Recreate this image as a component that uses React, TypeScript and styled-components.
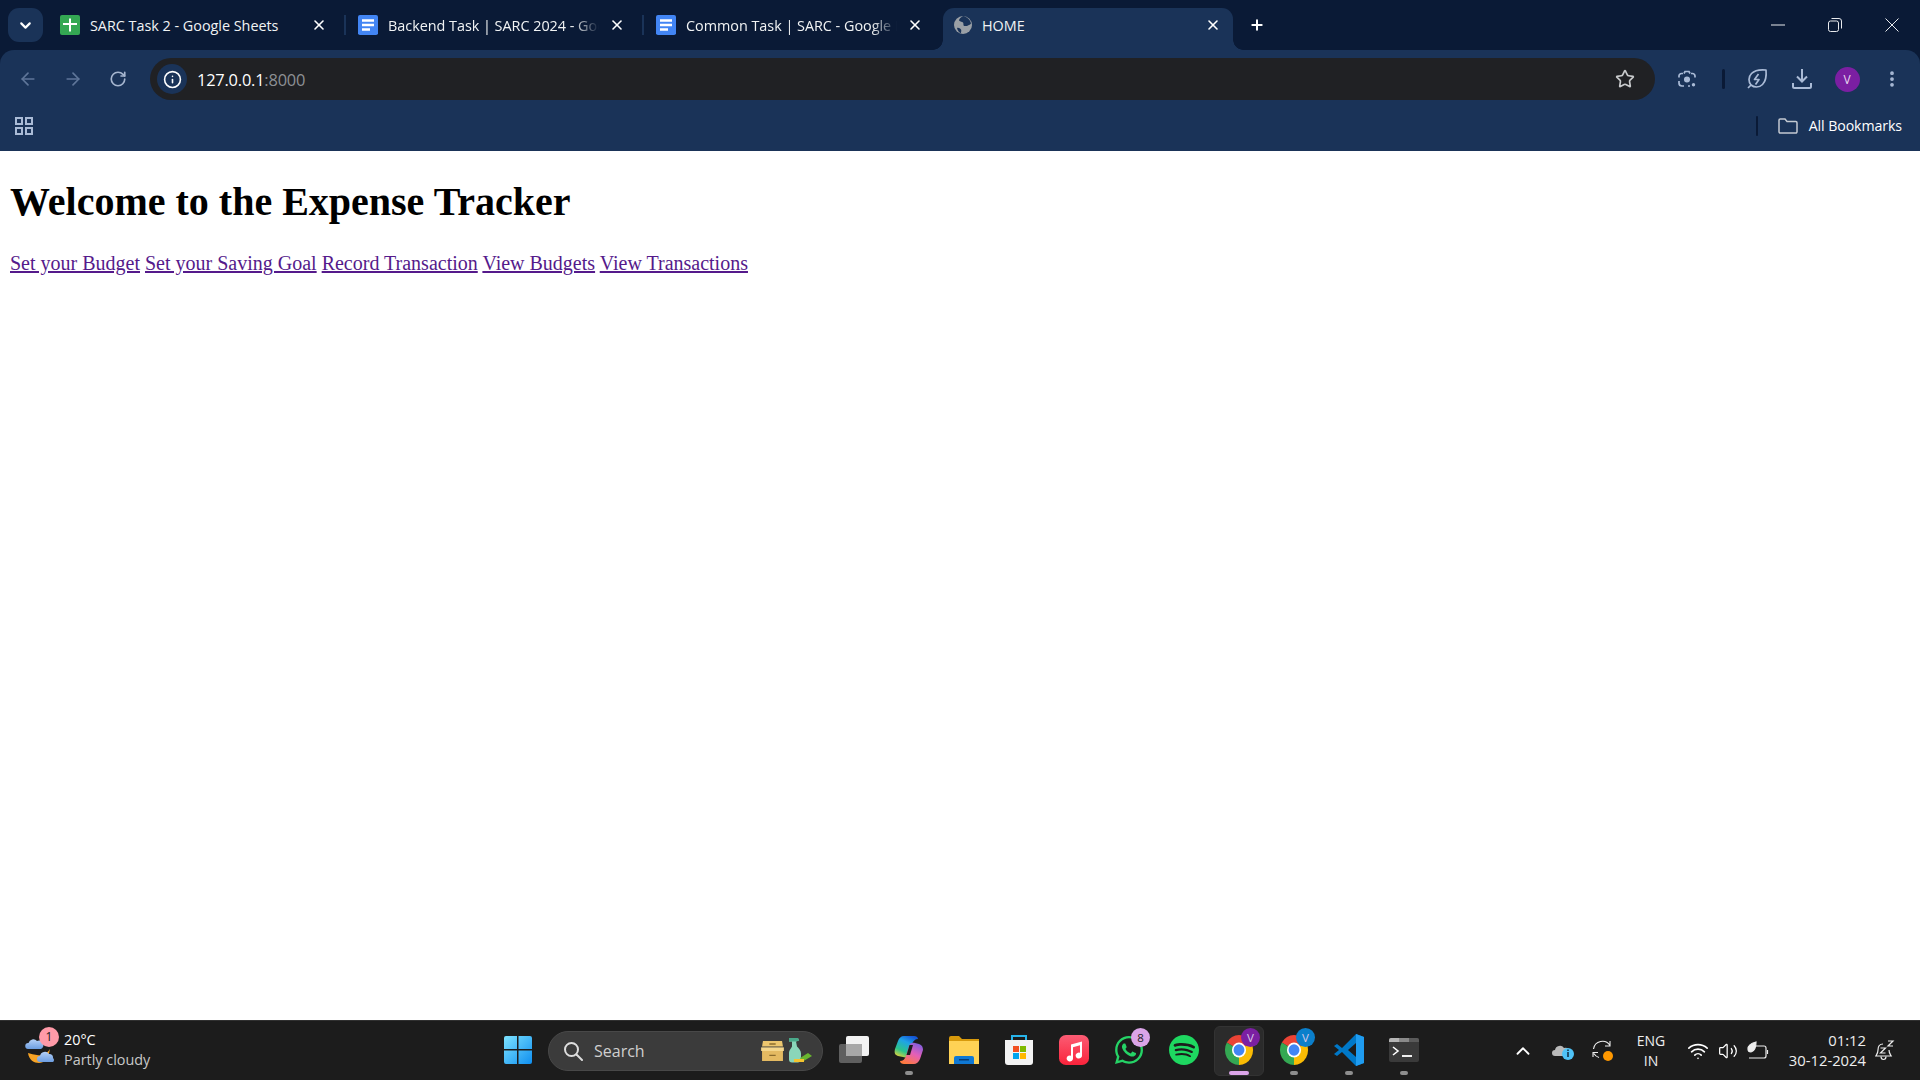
import React from "react";
import styled, { createGlobalStyle } from "styled-components";
import { ArrowLeft, ArrowRight, ChevronDown, ChevronUp, Info, MoreVertical, Plus, RotateCw, Star, Volume2, Wifi, X } from "lucide-react";
import { FaWhatsapp } from "react-icons/fa";
import { SiSpotify } from "react-icons/si";

const UI = `"Open Sans", "Noto Sans", sans-serif`;

const Global = createGlobalStyle`
  html, body { margin: 0; padding: 0; height: 100%; background: #fff; }
  #root { height: 100%; }
`;

const Screen = styled.div`display:flex;flex-direction:column;height:1080px;overflow:hidden;`;
const Strip = styled.div`display:flex;align-items:flex-end;height:50px;background:#0a1a36;padding-left:8px;`;
const TabMenu = styled.div`display:flex;align-items:center;justify-content:center;flex:none;width:35px;height:34px;margin:0 6px 8px 0;border-radius:11px;background:#1a3358;color:#fff;`;
const Tab = styled.div<{ $active?: boolean }>`
  position:relative;display:flex;align-items:center;gap:10px;flex:none;width:290px;height:42px;padding:0 12px 8px 11px;box-sizing:border-box;
  border-radius:11px 11px 0 0;background:${(p) => (p.$active ? "#1a3358" : "transparent")};
  ${(p) => p.$active ? `
    &::before,&::after{content:"";position:absolute;bottom:0;width:10px;height:10px;background:radial-gradient(circle at var(--c) 0,#0a1a36 9.5px,#1a3358 10px);}
    &::before{left:-10px;--c:0;}
    &::after{right:-10px;--c:100%;}
  ` : ""}
`;
const TabTitle = styled.div<{ $fade?: boolean }>`
  flex:1;min-width:0;white-space:nowrap;overflow:hidden;font:14.4px ${UI};color:#f1f3f4;letter-spacing:-.02px;
  ${(p) => p.$fade ? "mask-image:linear-gradient(90deg,#000 88%,transparent 100%);" : ""}
`;
const TabSep = styled.div<{ $hidden?: boolean }>`flex:none;width:2px;height:20px;margin:0 1px 15px 5px;background:${(p) => (p.$hidden ? "transparent" : "#1a3358")};`;
const NewTab = styled.div`display:flex;flex:none;color:#fff;margin:0 0 17px 16px;`;
const WindowControls = styled.div`display:flex;margin-left:auto;align-self:stretch;`;
const WindowButton = styled.div`display:flex;align-items:center;justify-content:center;width:57px;height:50px;color:#e8eaed;`;

const ToolbarBack = styled.div`background:#0a1a36;`;
const Toolbar = styled.div`display:flex;align-items:center;height:50px;background:#1a3358;border-radius:14px 14px 0 0;`;
const NavGroup = styled.div`display:flex;flex:none;padding-left:5px;width:150px;box-sizing:border-box;margin-top:8px;`;
const NavButton = styled.div<{ $dim?: boolean }>`display:flex;align-items:center;justify-content:center;flex:none;width:45px;height:30px;color:${(p) => (p.$dim ? "#5f7699" : "#a6b6cf")};`;
const Omnibox = styled.div`display:flex;align-items:center;flex:none;width:1505px;height:42px;margin-top:8px;border-radius:21px;background:#202124;box-sizing:border-box;padding:0 20px 0 7px;`;
const SiteChip = styled.div`display:flex;align-items:center;justify-content:center;flex:none;width:30px;height:30px;border-radius:50%;background:#1a3358;color:#fff;margin-right:10px;`;
const Url = styled.div`flex:1;font:16.4px ${UI};color:#fff;letter-spacing:-.2px;`;
const UrlPort = styled.span`color:#8d9094;`;
const StarSlot = styled.div`display:flex;color:#c8cacc;`;
const ToolIcons = styled.div`display:flex;align-items:center;flex:1;min-width:0;margin-top:8px;`;
const ToolIcon = styled.div<{ $w: number }>`display:flex;align-items:center;justify-content:center;flex:none;width:${(p) => p.$w}px;color:#aabbd6;`;
const ToolSep = styled.div`flex:none;width:3px;height:20px;margin-left:3px;background:#0a1a36;border-radius:2px;`;
const Avatar = styled.div`display:flex;align-items:center;justify-content:center;width:25px;height:25px;border-radius:50%;background:#7b1fa2;color:#e6d8ee;font:12px ${UI};`;

const Bookmarks = styled.div`display:flex;align-items:center;height:51px;background:#1a3358;padding:0 18px 0 15px;color:#aabbd6;`;
const BookmarkSep = styled.div`flex:none;width:2px;height:20px;margin-left:auto;background:#0a1a36;border-radius:1px;`;
const BookmarkFolder = styled.div`display:flex;margin:0 11px 0 20px;color:#c3c9d1;`;
const BookmarkLabel = styled.div`font:14.2px ${UI};color:#fff;letter-spacing:-.1px;`;

const Page = styled.main`flex:1;padding:0 10px;background:#fff;color:#000;font-family:"Liberation Serif","Times New Roman",serif;`;
const Heading = styled.h1`font-size:40px;font-weight:bold;margin:28px 0 26.8px;line-height:46px;`;
const Links = styled.p`margin:26.8px 0;font-size:20px;line-height:23px;`;
const VisitedLink = styled.a`color:#551a8b;text-decoration:underline;`;

const Taskbar = styled.footer`display:flex;align-items:center;flex:none;height:60px;box-sizing:border-box;background:#1c1c1c;border-top:1px solid #303030;`;
const Weather = styled.div`display:flex;align-items:center;flex:none;width:490px;box-sizing:border-box;padding-left:25px;gap:9px;`;
const WeatherIcon = styled.div`position:relative;width:30px;height:30px;flex:none;`;
const WeatherBadge = styled.div`position:absolute;left:14px;top:-9px;width:20px;height:20px;border-radius:50%;background:#ff9aa8;color:#1c1c1c;font:12px/20px ${UI};text-align:center;`;
const WeatherText = styled.div`display:flex;flex-direction:column;padding-bottom:1px;font:14.4px/20px ${UI};color:#fff;`;
const WeatherSub = styled.span`color:#c8c8c8;`;
const Slot = styled.div<{ $w?: number; $active?: boolean; $dot?: boolean }>`
  position:relative;display:flex;align-items:center;justify-content:center;flex:none;width:${(p) => p.$w ?? 55}px;height:50px;box-sizing:border-box;padding-bottom:2px;
  ${(p) => p.$active ? `&::before{content:"";position:absolute;left:3px;right:2px;top:0;bottom:0;background:#2b2b2b;border:1px solid #333;border-radius:6px;box-sizing:border-box;}` : ""}
  ${(p) => p.$dot ? `&::after{content:"";position:absolute;bottom:1px;left:50%;width:${p.$active ? 20 : 8}px;height:4px;margin-left:${p.$active ? -10 : -4}px;border-radius:2px;background:${p.$active ? "#dba4e8" : "#8e8e8e"};}` : ""}
  & > svg{position:relative;}
`;
const SearchPill = styled.div`display:flex;align-items:center;gap:4px;flex:none;width:275px;height:40px;margin:0 3px;box-sizing:border-box;padding:0 10px 0 14px;border-radius:20px;background:#3b3b3b;border:1px solid #484848;color:#cfcfcf;`;
const SearchLabel = styled.span`flex:1;margin-left:7px;font:16px ${UI};color:#cfcfcf;`;
const IconBadge = styled.div<{ $bg: string; $color?: string }>`position:absolute;right:6px;top:2px;width:19px;height:19px;border-radius:50%;background:${(p) => p.$bg};color:${(p) => p.$color ?? "#d8c8e8"};font:11.5px/19px ${UI};text-align:center;`;
const Tray = styled.div`display:flex;align-items:center;margin-left:auto;padding-right:16px;color:#fff;`;
const TraySlot = styled.div<{ $w: number }>`display:flex;align-items:center;justify-content:center;flex:none;width:${(p) => p.$w}px;`;
const Lang = styled.div`flex:none;width:56px;margin-right:4px;text-align:center;font:14px/20px ${UI};color:#eee;`;
const Clock = styled.div`flex:none;width:93px;padding-bottom:2px;text-align:right;font:14.8px/20px ${UI};color:#eee;`;

const SheetsIcon = () => (<svg width="20" height="20" viewBox="0 0 20 20"><rect width="20" height="20" rx="2" fill="#34a853"/><path d="M9 3.500h2V8h6v2h-6v6.500H9V10H3V8h6z" fill="#fff"/></svg>);
const DocsIcon = () => (<svg width="20" height="20" viewBox="0 0 20 24" preserveAspectRatio="none"><rect width="20" height="24" rx="2" fill="#4285f4"/><path d="M4 5h12v3H4zM4 10.500h12v3H4zM4 16h8v3H4z" fill="#fff"/></svg>);
const GlobeIcon = () => (<svg width="18" height="18" viewBox="0 0 18 18"><circle cx="9" cy="9" r="9" fill="#9aa0a6"/><path d="M9 0C7 1 5 3 5 4.500 6.500 6 8 5.500 9 6.500c.8 1 0 2.500 1 3.500h3c1-1 3-1 4-2.500C16.500 4 13 .5 9 0zM3 12c1.500-.6 3 .2 4 1.500.6 1 .2 2.600-.2 3.800C5 16.500 3.500 14.500 3 12z" fill="#1a3358"/></svg>);
const LensIcon = () => (<svg width="20" height="20" viewBox="0 0 20 20" fill="none" stroke="currentColor" strokeWidth="1.700"><path d="M6 4.500H4.500A2.500 2.500 0 0 0 2 7v1.500M18 8.500V7a2.500 2.500 0 0 0-2.500-2.500H14M2 12v2a3 3 0 0 0 3 3h2M7 4.500l1-2h4l1 2M11 17h2"/><circle cx="10" cy="10.500" r="2.200" fill="currentColor"/><circle cx="16.500" cy="15.800" r="1.700" fill="currentColor" stroke="none"/></svg>);
const LeafIcon = () => (<svg width="22" height="22" viewBox="0 0 22 22" fill="none" stroke="currentColor" strokeWidth="1.700" strokeLinejoin="round"><path d="M20 2c-5-.5-11 0-14.500 3.500C2 9 2.500 14 5 17c3 2.500 8 3 11.500-.5C20 13 20.500 7 20 2z"/><path d="M5 17l-3 3M12.500 6l-4 5.500h4.500l-3.500 5"/></svg>);
const DownloadTray = () => (<svg width="22" height="22" viewBox="0 0 22 22" fill="none" stroke="currentColor" strokeWidth="2"><path d="M11 1v12M6 8.500l5 5 5-5M2 15v3.500A1.500 1.500 0 0 0 3.500 20h15a1.500 1.500 0 0 0 1.500-1.500V15"/></svg>);
const AppsIcon = () => (<svg width="18" height="18" viewBox="0 0 18 18" fill="none" stroke="currentColor" strokeWidth="2"><rect x="1" y="1" width="6" height="6"/><rect x="11" y="1" width="6" height="6"/><rect x="1" y="11" width="6" height="6"/><rect x="11" y="11" width="6" height="6"/></svg>);
const FolderLine = () => (<svg width="20" height="16" viewBox="0 0 20 16" fill="none" stroke="currentColor" strokeWidth="1.500"><path d="M1 2.200A1.200 1.200 0 0 1 2.200 1H7l2 2.500h8.800A1.200 1.200 0 0 1 19 4.700V13.800A1.200 1.200 0 0 1 17.800 15H2.200A1.200 1.200 0 0 1 1 13.800z"/></svg>);
const MinimizeIcon = () => (<svg width="14" height="2" viewBox="0 0 14 2"><path d="M0 1h14" stroke="currentColor"/></svg>);
const RestoreIcon = () => (<svg width="14" height="14" viewBox="0 0 14 14" fill="none" stroke="currentColor"><rect x=".5" y="3" width="10" height="10.500" rx="2"/><path d="M3.500 .5H11a2.500 2.500 0 0 1 2.500 2.500v7.500"/></svg>);
const CloseIcon = () => (<svg width="14" height="14" viewBox="0 0 14 14" stroke="currentColor"><path d="M.5 .5l13 13M13.500 .5l-13 13"/></svg>);

const WeatherArt = () => (
  <svg width="30" height="30" viewBox="0 0 30 30">
    <defs><linearGradient id="cl" x1="0" y1="0" x2="0" y2="1"><stop offset="0" stopColor="#b4d0f7"/><stop offset="1" stopColor="#6c9de0"/></linearGradient></defs>
    <path d="M3 17c1 7 6 10 11 10 5 0 9-3 11-14-3 5-9 7-13 6-3-.5-6-1-9-2z" fill="#f7a325"/>
    <path d="M3 13a3 3 0 0 1 .5-6A5 5 0 0 1 12 5a3.500 3.500 0 0 1 4 8z" fill="url(#cl)"/>
    <path d="M15 26a3 3 0 0 1 0-6 5 5 0 0 1 9-2 3.500 3.500 0 0 1 4 4 2.500 2.500 0 0 1 0 4z" fill="url(#cl)"/>
  </svg>
);
const StartIcon = () => (
  <svg width="30" height="30" viewBox="0 0 30 30">
    <defs><linearGradient id="win" x1="0" y1="0" x2="1" y2="1"><stop offset="0" stopColor="#7de3ff"/><stop offset="1" stopColor="#0f8ff0"/></linearGradient></defs>
    <path d="M1 3a2 2 0 0 1 2-2h11v13H1zM15.500 1H27a2 2 0 0 1 2 2v11H15.500zM1 15.500h13V29H3a2 2 0 0 1-2-2zM15.500 15.500H29V27a2 2 0 0 1-2 2H15.500z" fill="url(#win)"/>
  </svg>
);
const MagnifierIcon = () => (<svg width="20" height="20" viewBox="0 0 20 20" fill="none" stroke="#ddd" strokeWidth="2"><circle cx="8.500" cy="8.500" r="6.500"/><path d="M13.500 13.500L19 19" strokeLinecap="round"/></svg>);
const BoxesIcon = () => (
  <svg width="23" height="20" viewBox="0 0 25 22"><path d="M2 0h21l1 6H1z" fill="#ecc66e"/><rect x="0" y="7" width="25" height="4" fill="#f4d68b"/><rect x="1" y="11" width="23" height="11" fill="#e4ba62"/><path d="M9 2.500h7V4H9zM9 15h7v1.500H9z" fill="#8b6c2e"/></svg>
);
const BottleIcon = () => (
  <svg width="24" height="25" viewBox="0 0 24 25"><path d="M1 0h9l1 2.500-3 1 1 5c2 2 4 4 4 7v6c0 2-2 3-3 3H4c-2 0-3-1-3-3v-7c0-2 2-4 3-6V3.500H1z" fill="#8ad6b9"/><path d="M1 0h9l1 2.500-3 1H1z" fill="#4aa98a"/><path d="M12 20l8-5 4 3-10 6z" fill="#69b52f"/><path d="M6 21h10v3H6z" fill="#f4c430"/></svg>
);
const TaskViewIcon = () => (<svg width="30" height="27" viewBox="0 0 30 27"><rect y="8" width="23" height="19" rx="2" fill="#5f5f5f"/><rect x="7" width="23" height="20" rx="2" fill="#f2f2f2"/><rect x="7" y="8" width="16" height="12" fill="#a8a8a8"/></svg>);
const CopilotIcon = () => (
  <svg width="30" height="28" viewBox="0 0 30 28">
    <defs>
      <linearGradient id="cp1" x1=".7" y1="0" x2=".2" y2="1"><stop offset="0" stopColor="#1557d6"/><stop offset=".3" stopColor="#1fa3e8"/><stop offset=".7" stopColor="#2bc48a"/><stop offset="1" stopColor="#e4d13a"/></linearGradient>
      <linearGradient id="cp2" x1=".8" y1="0" x2=".3" y2="1"><stop offset="0" stopColor="#7a5ee0"/><stop offset=".5" stopColor="#e45fb8"/><stop offset="1" stopColor="#ff7a3d"/></linearGradient>
    </defs>
    <path d="M10 0h10c2 0 4 1 4 3-3 0-5 2-6 5l-3 10c-1 3-3 4-6 3l-5-1C1 19 0 17 1 13l3-8C5 2 7 0 10 0z" fill="url(#cp1)"/>
    <path d="M20 28H10c-2 0-4-1-4-3 3 0 5-2 6-5l3-10c1-3 3-4 6-3l4 1c3 1 4 3 4 6l-3 9c-1 3-4 5-6 5z" fill="url(#cp2)"/>
    <path d="M15.500 9h3.500l-3 10h-3.500z" fill="#1c1c1c"/>
  </svg>
);
const ExplorerIcon = () => (
  <svg width="30" height="28" viewBox="0 0 30 28"><path d="M0 2a2 2 0 0 1 2-2h8l3 3h17v5H0z" fill="#d89a0c"/><path d="M0 5h30v23H0z" fill="#ffd255"/><path d="M5 28v-6a2 2 0 0 1 2-2h16a2 2 0 0 1 2 2v6z" fill="#0f78d4"/><path d="M10 23h10v1.500H10z" fill="#083c75"/></svg>
);
const StoreIcon = () => (
  <svg width="30" height="30" viewBox="0 0 30 30"><path d="M8 5V1h14v4" fill="none" stroke="#27b4ea" strokeWidth="2"/><path d="M1 5h28v22a3 3 0 0 1-3 3H4a3 3 0 0 1-3-3z" fill="#f3f3f3"/><rect x="9" y="11" width="6" height="6" fill="#f25022"/><rect x="16" y="11" width="6" height="6" fill="#7fba00"/><rect x="9" y="18" width="6" height="6" fill="#00a4ef"/><rect x="16" y="18" width="6" height="6" fill="#ffb900"/></svg>
);
const MusicIcon = () => (
  <svg width="30" height="30" viewBox="0 0 30 32" preserveAspectRatio="none"><defs><linearGradient id="mu" x1="0" y1="0" x2="0" y2="1"><stop offset="0" stopColor="#fb5c74"/><stop offset="1" stopColor="#fa233b"/></linearGradient></defs><rect width="30" height="32" rx="7" fill="url(#mu)"/><path d="M12 10l11-3v15a3.200 3.200 0 1 1-2-3V11l-7 2v12a3.200 3.200 0 1 1-2-3z" fill="#fff"/></svg>
);
const ChromeIcon = () => (
  <svg width="30" height="32" viewBox="0 0 32 32" preserveAspectRatio="none"><path d="M16 16L3.010 8.500A15 15 0 0 1 28.990 8.500Z" fill="#ea4335"/><path d="M16 16L28.990 8.500A15 15 0 0 1 16 31Z" fill="#fbbc04"/><path d="M16 16L16 31A15 15 0 0 1 3.010 8.500Z" fill="#34a853"/><circle cx="16" cy="16" r="7.500" fill="#fff"/><circle cx="16" cy="16" r="5.800" fill="#4285f4"/></svg>
);
const VSCodeIcon = () => (
  <svg width="30" height="32" viewBox="0 0 30 32"><path d="M22 0l8 3v26l-8 3L8 18l-5 4-3-2 5-4-5-4 3-2 5 4z" fill="#0078c8"/><path d="M22 0l8 3v26l-8 3z" fill="#1f9cf0"/><path d="M22 9l-8 7 8 7z" fill="#1c1c1c"/></svg>
);
const TerminalIcon = () => (
  <svg width="30" height="24" viewBox="0 0 30 24"><rect width="30" height="24" rx="2" fill="#3a3a3a"/><path d="M2 0h8v4H0V2a2 2 0 0 1 2-2z" fill="#b5b5b5"/><path d="M10 0h10v4H10z" fill="#8a8a8a"/><path d="M20 0h8a2 2 0 0 1 2 2v2H20z" fill="#5a5a5a"/><path d="M4 9l5 4-5 4" fill="none" stroke="#fff" strokeWidth="1.600"/><path d="M13 17h10v2H13z" fill="#eee"/></svg>
);
const CloudInfoIcon = () => (
  <svg width="22" height="18" viewBox="0 0 22 18"><path d="M3 14a3 3 0 0 1 0-6 5 5 0 0 1 9-2 4 4 0 0 1 3 8z" fill="#b9b9b9"/><circle cx="16" cy="12" r="6" fill="#4fc3f7"/><path d="M15.200 7.500h1.600v1.500h-1.600zM15.200 10h1.600v5h-1.600z" fill="#14344a"/></svg>
);
const SyncIcon = () => (
  <svg width="22" height="22" viewBox="0 0 22 22" fill="none" stroke="#eee" strokeWidth="1.100"><path d="M1.500 9A9 9 0 0 1 18 5.500M18 1v5h-5M1 17v-4.500h5M1.800 13.500C3 15.500 5 17 7 17.500"/><circle cx="16" cy="16" r="5" fill="#ff9800" stroke="none"/></svg>
);
const BatteryLeaf = () => (
  <svg width="22" height="20" viewBox="0 0 22 20" fill="none" stroke="#eee" strokeWidth="1.200"><path d="M9 5h8a2 2 0 0 1 2 2v8a2 2 0 0 1-2 2H2"/><path d="M20.500 9v4"/><path d="M9 1c-4 1-8 3-8 7 0 2 1 3 3 3 4-1 5-6 5-10z" fill="#eee"/></svg>
);
const BellZ = () => (
  <svg width="20" height="22" viewBox="0 0 20 22" fill="none" stroke="#eee" strokeWidth="1.200"><path d="M8 4C4 4 3 7 3 10c0 3-1 4-2.200 6h15.400C15 14 14 13 14 10"/><path d="M6 16.500c0 4 5 4 5 0"/><path d="M5.500 8h5l-5 5h5M13 1h5l-5 5h5"/></svg>
);

const tabs = [
  { title: "SARC Task 2 - Google Sheets", icon: <SheetsIcon /> },
  { title: "Backend Task | SARC 2024 - Google Docs", icon: <DocsIcon />, fade: true },
  { title: "Common Task | SARC - Google Docs", icon: <DocsIcon />, fade: true },
];

export default function App() {
  return (
    <>
      <Global />
      <Screen>
        <Strip>
          <TabMenu><ChevronDown size={17} strokeWidth={3} /></TabMenu>
          {tabs.map((t, i) => (
            <React.Fragment key={t.title}>
              <Tab>
                {t.icon}
                <TabTitle $fade={t.fade}>{t.title}</TabTitle>
                <X size={16} strokeWidth={2.4} color="#fff" />
              </Tab>
              <TabSep $hidden={i === 2} />
            </React.Fragment>
          ))}
          <Tab $active>
            <GlobeIcon />
            <TabTitle>HOME</TabTitle>
            <X size={16} strokeWidth={2.4} color="#fff" />
          </Tab>
          <NewTab><Plus size={16} strokeWidth={3} /></NewTab>
          <WindowControls>
            <WindowButton><MinimizeIcon /></WindowButton>
            <WindowButton><RestoreIcon /></WindowButton>
            <WindowButton><CloseIcon /></WindowButton>
          </WindowControls>
        </Strip>
        <ToolbarBack>
          <Toolbar>
            <NavGroup>
              <NavButton $dim><ArrowLeft size={20} strokeWidth={2} /></NavButton>
              <NavButton $dim><ArrowRight size={20} strokeWidth={2} /></NavButton>
              <NavButton><RotateCw size={18} strokeWidth={2.2} /></NavButton>
            </NavGroup>
            <Omnibox>
              <SiteChip><Info size={19} strokeWidth={2} /></SiteChip>
              <Url>127.0.0.1<UrlPort>:8000</UrlPort></Url>
              <StarSlot><Star size={20} strokeWidth={2} /></StarSlot>
            </Omnibox>
            <ToolIcons>
              <ToolIcon $w={64}><LensIcon /></ToolIcon>
              <ToolSep />
              <ToolIcon $w={64}><LeafIcon /></ToolIcon>
              <ToolIcon $w={26}><DownloadTray /></ToolIcon>
              <ToolIcon $w={64}><Avatar>V</Avatar></ToolIcon>
              <ToolIcon $w={26}><MoreVertical size={20} strokeWidth={2.5} /></ToolIcon>
            </ToolIcons>
          </Toolbar>
        </ToolbarBack>
        <Bookmarks>
          <AppsIcon />
          <BookmarkSep />
          <BookmarkFolder><FolderLine /></BookmarkFolder>
          <BookmarkLabel>All Bookmarks</BookmarkLabel>
        </Bookmarks>
        <Page>
          <Heading>Welcome to the Expense Tracker</Heading>
          <Links>
            <VisitedLink href="#budget">Set your Budget</VisitedLink>{" "}
            <VisitedLink href="#goal">Set your Saving Goal</VisitedLink>{" "}
            <VisitedLink href="#record">Record Transaction</VisitedLink>{" "}
            <VisitedLink href="#budgets">View Budgets</VisitedLink>{" "}
            <VisitedLink href="#transactions">View Transactions</VisitedLink>
          </Links>
        </Page>
        <Taskbar>
          <Weather>
            <WeatherIcon>
              <WeatherArt />
              <WeatherBadge>1</WeatherBadge>
            </WeatherIcon>
            <WeatherText>
              <span>20°C</span>
              <WeatherSub>Partly cloudy</WeatherSub>
            </WeatherText>
          </Weather>
          <Slot><StartIcon /></Slot>
          <SearchPill>
            <MagnifierIcon />
            <SearchLabel>Search</SearchLabel>
            <BoxesIcon />
            <BottleIcon />
          </SearchPill>
          <Slot><TaskViewIcon /></Slot>
          <Slot $dot><CopilotIcon /></Slot>
          <Slot><ExplorerIcon /></Slot>
          <Slot><StoreIcon /></Slot>
          <Slot><MusicIcon /></Slot>
          <Slot><FaWhatsapp size={32} color="#25d366" /><IconBadge $bg="#dba4e8" $color="#222">8</IconBadge></Slot>
          <Slot><SiSpotify size={30} color="#1ed760" /></Slot>
          <Slot $active $dot><ChromeIcon /><IconBadge $bg="#7b1fa2">V</IconBadge></Slot>
          <Slot $dot><ChromeIcon /><IconBadge $bg="#0b7fcb">V</IconBadge></Slot>
          <Slot $dot><VSCodeIcon /></Slot>
          <Slot $dot><TerminalIcon /></Slot>
          <Tray>
            <TraySlot $w={40}><ChevronUp size={22} strokeWidth={2} /></TraySlot>
            <TraySlot $w={40}><CloudInfoIcon /></TraySlot>
            <TraySlot $w={40}><SyncIcon /></TraySlot>
            <Lang>ENG<br />IN</Lang>
            <TraySlot $w={30}><Wifi size={22} strokeWidth={1.8} /></TraySlot>
            <TraySlot $w={30}><Volume2 size={20} strokeWidth={1.5} /></TraySlot>
            <TraySlot $w={30}><BatteryLeaf /></TraySlot>
            <Clock>01:12<br />30-12-2024</Clock>
            <TraySlot $w={38}><BellZ /></TraySlot>
          </Tray>
        </Taskbar>
      </Screen>
    </>
  );
}
